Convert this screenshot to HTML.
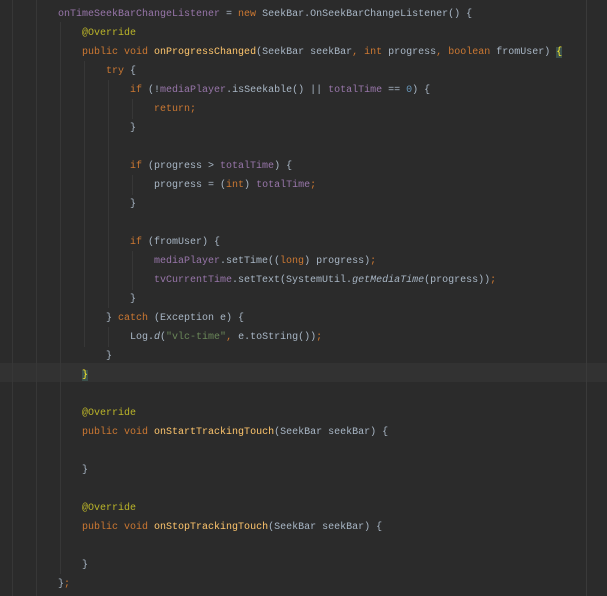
<!DOCTYPE html>
<html><head><meta charset="utf-8"><style>
html,body{margin:0;padding:0;background:#2b2b2b;width:607px;height:596px;overflow:hidden;position:relative}
pre{position:absolute;left:58px;top:5px;margin:0;font-family:"Liberation Mono",monospace;font-size:10px;line-height:19px;color:#a9b7c6;letter-spacing:0px;white-space:pre}
.k{color:#cc7832}.f{color:#9876aa}.m{color:#ffc66d}.a{color:#bbb529}.n{color:#6897bb}.s{color:#6a8759}.i{font-style:italic}
.g{position:absolute;width:1px;background:#373737}
.hl{position:absolute;left:0;top:363px;width:607px;height:19px;background:#323232}
.b{background:#3b514d;color:#ffef28}
</style></head><body>
<div class="hl"></div>
<div class="g" style="left:12px;top:0;height:596px"></div>
<div class="g" style="left:36px;top:0;height:596px"></div>
<div class="g" style="left:60px;top:22px;height:552px"></div>
<div class="g" style="left:84px;top:61px;height:286px"></div>
<div class="g" style="left:108px;top:80px;height:228px"></div>
<div class="g" style="left:108px;top:327px;height:20px"></div>
<div class="g" style="left:132px;top:99px;height:20px"></div>
<div class="g" style="left:132px;top:175px;height:20px"></div>
<div class="g" style="left:132px;top:251px;height:39px"></div>
<div class="g" style="left:586px;top:0;height:596px;background:#3a3a3a"></div>
<pre><span class="f">onTimeSeekBarChangeListener</span> = <span class="k">new</span> SeekBar.OnSeekBarChangeListener() {
    <span class="a">@Override</span>
    <span class="k">public void</span> <span class="m">onProgressChanged</span>(SeekBar seekBar<span class="k">,</span> <span class="k">int</span> progress<span class="k">,</span> <span class="k">boolean</span> fromUser) <span class="b">{</span>
        <span class="k">try</span> {
            <span class="k">if</span> (!<span class="f">mediaPlayer</span>.isSeekable() || <span class="f">totalTime</span> == <span class="n">0</span>) {
                <span class="k">return;</span>
            }

            <span class="k">if</span> (progress &gt; <span class="f">totalTime</span>) {
                progress = (<span class="k">int</span>) <span class="f">totalTime</span><span class="k">;</span>
            }

            <span class="k">if</span> (fromUser) {
                <span class="f">mediaPlayer</span>.setTime((<span class="k">long</span>) progress)<span class="k">;</span>
                <span class="f">tvCurrentTime</span>.setText(SystemUtil.<span class="i">getMediaTime</span>(progress))<span class="k">;</span>
            }
        } <span class="k">catch</span> (Exception e) {
            Log.<span class="i">d</span>(<span class="s">"vlc-time"</span><span class="k">,</span> e.toString())<span class="k">;</span>
        }
    <span class="b">}</span>

    <span class="a">@Override</span>
    <span class="k">public void</span> <span class="m">onStartTrackingTouch</span>(SeekBar seekBar) {

    }

    <span class="a">@Override</span>
    <span class="k">public void</span> <span class="m">onStopTrackingTouch</span>(SeekBar seekBar) {

    }
}<span class="k">;</span></pre>
</body></html>
